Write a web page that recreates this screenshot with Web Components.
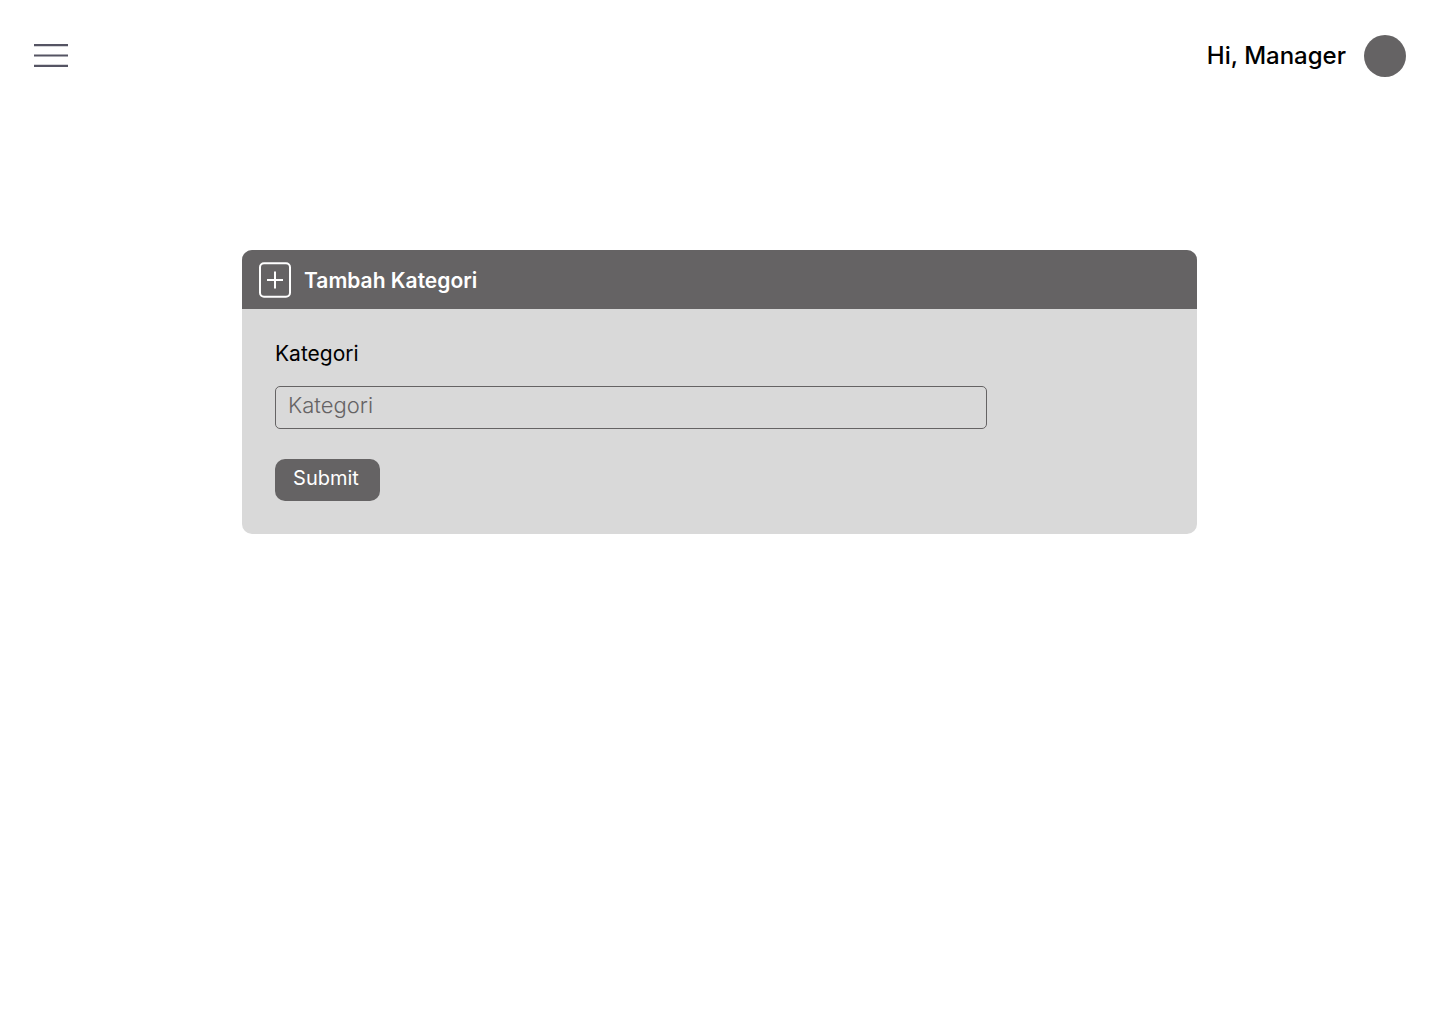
<!DOCTYPE html>
<html lang="id">
<head>
<meta charset="utf-8">
<meta name="viewport" content="width=device-width, initial-scale=1">
<title>Tambah Kategori</title>
<style>
  body { margin: 0; background: #fff; color: #000; font-family: Inter, "Liberation Sans", sans-serif; }
</style>
</head>
<body>
<category-page>
  <top-bar slot="header">Hi, Manager</top-bar>
  <panel-card>
    <span slot="title">Tambah Kategori</span>
    <category-form></category-form>
  </panel-card>
</category-page>

<script>
  const define = (name, html) => {
    const template = document.createElement('template');
    template.innerHTML = html;
    customElements.define(name, class extends HTMLElement {
      constructor() {
        super();
        this.attachShadow({ mode: 'open' }).append(template.content.cloneNode(true));
      }
    });
  };

  define('category-page', `
    <style>
      :host { display: flex; flex-direction: column; min-height: 100vh; --accent: #656364; --surface: #d9d9d9; }
      main { padding: 138px 243px 40px 242px; }
      @media (max-width: 1000px) { main { padding: 60px 24px; } }
    </style>
    <slot name="header"></slot>
    <main><slot></slot></main>`);

  define('top-bar', `
    <style>
      :host { display: block; }
      header { display: flex; align-items: center; justify-content: space-between; padding: 35px 34px; }
      button { display: block; padding: 0; border: 0; background: none; cursor: pointer; }
      svg { display: block; }
      .user { display: flex; align-items: center; gap: 18px; font-size: 24px; font-weight: 500; line-height: 28px; }
      .avatar { width: 42px; height: 42px; border-radius: 50%; background: var(--accent); }
    </style>
    <header>
      <button type="button" aria-label="Menu">
        <svg width="34" height="24" viewBox="0 0 34 24" fill="none" stroke="#555463" stroke-width="2.2">
          <path d="M0 1.1H34M0 11.5H34M0 21.9H34"/>
        </svg>
      </button>
      <div class="user"><span><slot></slot></span><span class="avatar"></span></div>
    </header>`);

  define('panel-card', `
    <style>
      :host { display: block; border-radius: 10px; overflow: hidden; background: var(--surface); }
      h1 { display: flex; align-items: center; gap: 13px; margin: 0; padding: 12px 17px 11px; background: var(--accent); color: #fff; font-size: 21px; font-weight: 600; line-height: 28px; }
      svg { display: block; flex: none; }
      slot[name="title"] { display: block; padding-top: 2px; }
    </style>
    <h1>
      <svg width="32" height="36" viewBox="0 0 32 36" fill="none" stroke="#fff" stroke-width="2" aria-hidden="true">
        <rect x="1" y="1.3" width="30" height="33.4" rx="4"/>
        <path d="M8 18H24M16 9.5V26.5"/>
      </svg>
      <slot name="title"></slot>
    </h1>
    <slot></slot>`);

  define('category-form', `
    <style>
      :host { display: block; }
      form { display: flex; flex-direction: column; align-items: flex-start; padding: 31px 33px 33px; }
      label { font-size: 21px; line-height: 28px; }
      input { box-sizing: border-box; width: 100%; max-width: 712px; height: 43px; margin: 18px 0 30px; padding: 0 12px 5px; border: 1px solid var(--accent); border-radius: 5px; background: transparent; color: #000; font: 300 22px/28px Inter, "Liberation Sans", sans-serif; }
      input::placeholder { color: var(--accent); opacity: 1; }
      button { box-sizing: border-box; min-width: 105px; height: 42px; padding: 0 21px 4px 18px; border: 0; border-radius: 10px; background: var(--accent); color: #fff; font: 400 20px/28px Inter, "Liberation Sans", sans-serif; cursor: pointer; }
    </style>
    <form>
      <label for="kategori">Kategori</label>
      <input id="kategori" name="kategori" type="text" placeholder="Kategori">
      <button type="submit">Submit</button>
    </form>`);
</script>
</body>
</html>
